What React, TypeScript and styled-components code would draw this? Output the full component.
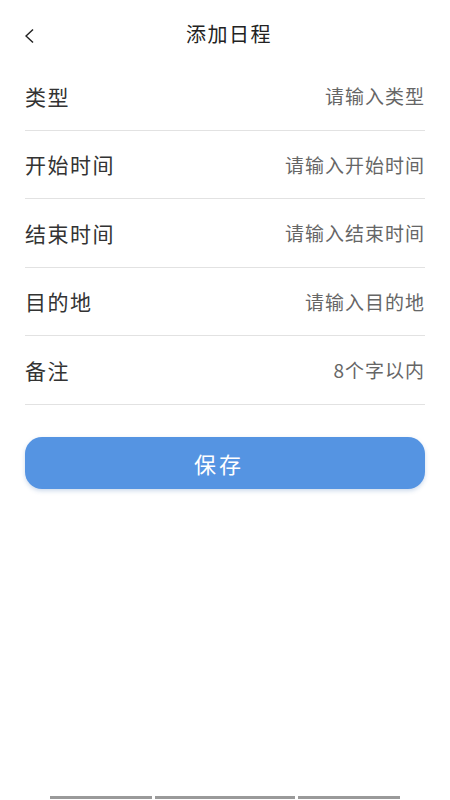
import styled, { createGlobalStyle } from "styled-components";

const GlobalStyle = createGlobalStyle`
  html, body {
    margin: 0;
    padding: 0;
    background: #fff;
  }
  body {
    font-family: "Noto Sans CJK SC", "Noto Sans", sans-serif;
  }
`;

const Page = styled.div`
  display: flex;
  flex-direction: column;
  min-height: 100vh;
  box-sizing: border-box;
  padding: 0 25px 1px;
`;

const Header = styled.div`
  display: flex;
  align-items: center;
  justify-content: center;
  position: relative;
  height: 58px;
  padding-top: 4px;
`;

const BackButton = styled.button`
  position: absolute;
  left: 0;
  top: 28px;
  border: none;
  background: none;
  padding: 0;
  width: 10px;
  height: 16px;
  display: flex;
`;

const Title = styled.h1`
  margin: 0 0 0 8px;
  font-size: 20px;
  font-weight: 400;
  color: #222;
  letter-spacing: 1.5px;
`;

const Form = styled.div`
  display: flex;
  flex-direction: column;
`;

const Row = styled.div`
  display: flex;
  align-items: center;
  justify-content: space-between;
  height: 67.5px;
  border-bottom: 1px solid #e2e2e2;
`;

const Label = styled.span`
  font-size: 21px;
  color: #333;
  letter-spacing: 1.5px;
`;

const Input = styled.input`
  border: none;
  outline: none;
  background: none;
  text-align: right;
  font-family: inherit;
  font-size: 19px;
  letter-spacing: 1px;
  padding: 0;
  width: 220px;
  color: #333;
  &::placeholder {
    color: #666;
  }
`;

const SaveButton = styled.button`
  margin-top: 32px;
  height: 52px;
  border: none;
  border-radius: 17px;
  padding: 0 12px 0 0;
  background: #5594e2;
  color: #fff;
  font-family: inherit;
  font-size: 22px;
  letter-spacing: 3px;
  box-shadow: 0 2px 4px rgba(60, 110, 180, 0.25);
`;

const Spacer = styled.div`
  flex: 1;
`;

const HomeBar = styled.div`
  display: flex;
  gap: 3px;
  padding: 0 25px;
`;

const Segment = styled.div<{ $w: number }>`
  width: ${(p) => p.$w}px;
  height: 3px;
  background: #9a9a9a;
`;

const fields = [
  { label: "类型", placeholder: "请输入类型" },
  { label: "开始时间", placeholder: "请输入开始时间" },
  { label: "结束时间", placeholder: "请输入结束时间" },
  { label: "目的地", placeholder: "请输入目的地" },
  { label: "备注", placeholder: "8个字以内" },
];

export default function App() {
  return (
    <>
      <GlobalStyle />
      <Page>
        <Header>
          <BackButton aria-label="返回">
            <svg width="10" height="16" viewBox="0 0 10 16">
              <polyline
                points="8,1.5 1,8 8,14.5"
                fill="none"
                stroke="#222"
                strokeWidth="1.5"
              />
            </svg>
          </BackButton>
          <Title>添加日程</Title>
        </Header>
        <Form>
          {fields.map((f) => (
            <Row key={f.label}>
              <Label>{f.label}</Label>
              <Input placeholder={f.placeholder} />
            </Row>
          ))}
        </Form>
        <SaveButton>保存</SaveButton>
        <Spacer />
        <HomeBar>
          <Segment $w={102} />
          <Segment $w={140} />
          <Segment $w={102} />
        </HomeBar>
      </Page>
    </>
  );
}
